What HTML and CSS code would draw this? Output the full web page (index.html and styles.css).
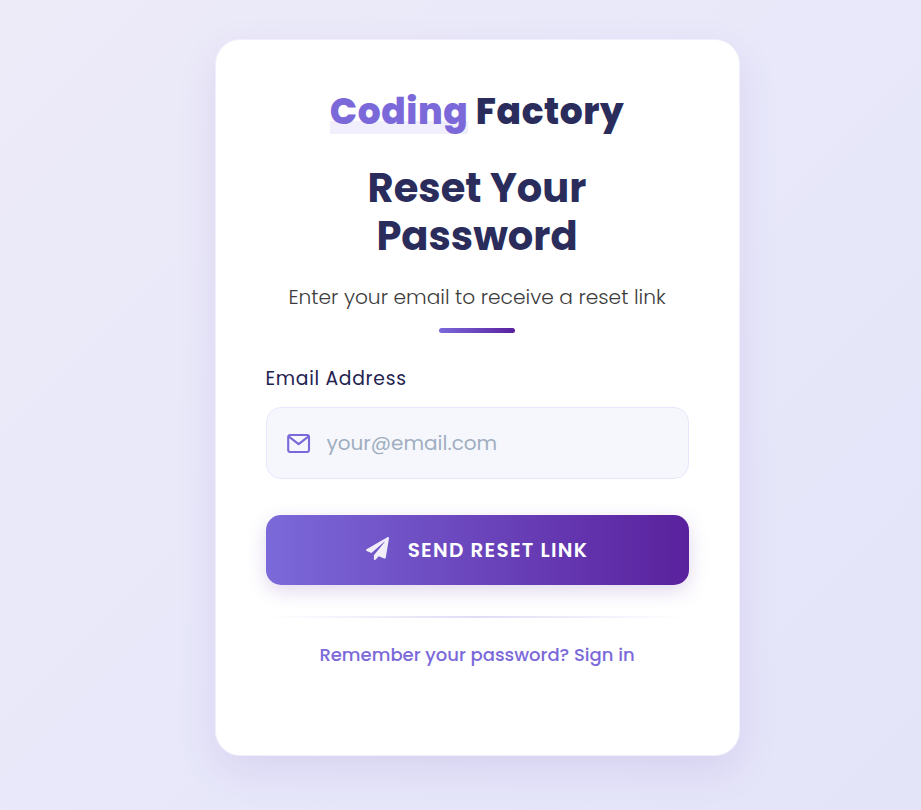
FILE: index.html
```html
<!DOCTYPE html>
<html lang="en">
<head>
<meta charset="utf-8">
<title>Reset Your Password</title>
<link rel="stylesheet" href="styles.css">
</head>
<body>
<main class="card">
  <div class="brand"><span class="brand-accent">Coding</span> Factory</div>
  <h1 class="heading">Reset Your<br>Password</h1>
  <p class="subtitle">Enter your email to receive a reset link</p>
  <div class="accent-bar"></div>
  <form class="form">
    <label class="label" for="email">Email Address</label>
    <div class="field">
      <svg class="field-icon" viewBox="0 0 24 20" fill="none" stroke="currentColor" stroke-width="2.1" stroke-linejoin="round">
        <rect x="1.2" y="2" width="20.8" height="17" rx="2"/>
        <path d="M1.6 3.4 11.6 11.2 21.6 3.4"/>
      </svg>
      <input class="input" id="email" type="email" placeholder="your@email.com">
    </div>
    <button class="button" type="button">
      <svg class="button-icon" viewBox="0 0 512 512" fill="currentColor">
        <path d="M476 3.2L12.5 270.6c-18.1 10.4-15.8 35.6 2.2 43.2L121 358.4l287.3-253.2c5.5-4.9 13.3 2.6 8.6 8.3L176 407v80.5c0 23.6 28.5 32.9 42.5 15.8L282 426l124.6 52.2c14.2 6 30.4-2.9 33-18.2l72-432C515 7.8 493.3-6.8 476 3.2z"/>
      </svg>
      <span>SEND RESET LINK</span>
    </button>
  </form>
  <div class="divider"></div>
  <a class="signin" href="#">Remember your password? Sign in</a>
</main>
</body>
</html>
```

FILE: styles.css
```css
* { box-sizing: border-box; }

body {
  margin: 0;
  min-height: 810px;
  padding: 39px 0 54px 33px;
  display: flex;
  justify-content: center;
  align-items: flex-start;
  font-family: Poppins, Inter, sans-serif;
  color: #2a2d5b;
  background: linear-gradient(135deg, #edebf8 0%, #e8e8fa 50%, #e4e4f9 100%);
}

.card {
  width: 525px;
  height: 717px;
  padding: 48px 50px 0;
  border: 1px solid #f1effb;
  border-radius: 25px;
  background: #fff;
  box-shadow: 0 15px 40px rgba(90, 40, 170, 0.1);
  display: flex;
  flex-direction: column;
  align-items: center;
}

.brand {
  font-size: 36px;
  line-height: 48px;
  font-weight: 800;
  letter-spacing: 0.6px;
  white-space: nowrap;
}

.brand-accent {
  display: inline-block;
  color: #7b69da;
  background: linear-gradient(#f1effb, #f1effb) 0 33px / 100% 13px no-repeat;
}

.heading {
  margin: 28px 0 0;
  font-size: 40px;
  line-height: 48px;
  font-weight: 700;
  text-align: center;
}

.subtitle {
  margin: 21px 0 0;
  font-size: 20.2px;
  line-height: 32px;
  font-weight: 300;
  white-space: nowrap;
  color: #3c3c3c;
}

.accent-bar {
  width: 76px;
  height: 5px;
  margin-top: 15px;
  border-radius: 3px;
  background: linear-gradient(90deg, #7b69da, #5a219d);
}

.form {
  width: 100%;
  margin-top: 31px;
  display: flex;
  flex-direction: column;
}

.label {
  font-size: 18.75px;
  line-height: 30px;
  font-weight: 400;
  letter-spacing: 0.7px;
  color: #1f2250;
}

.field {
  height: 72px;
  margin-top: 13px;
  padding: 0 20px;
  display: flex;
  align-items: center;
  gap: 16px;
  border: 1px solid #e7e7fc;
  border-radius: 15px;
  background: #f6f7fd;
}

.field-icon {
  width: 24px;
  height: 20px;
  flex: none;
  color: #7b69da;
}

.input {
  flex: 1;
  min-width: 0;
  height: 70px;
  padding: 0;
  border: 0;
  outline: 0;
  background: transparent;
  font: 400 20px Poppins, Inter, sans-serif;
  color: #2a2d5b;
}

.input::placeholder { color: #a0aec0; }

.button {
  height: 70px;
  margin-top: 36px;
  padding: 0;
  display: flex;
  align-items: center;
  justify-content: center;
  gap: 19px;
  border: 0;
  border-radius: 15px;
  background: linear-gradient(90deg, #7b69da, #5a219d);
  box-shadow: 0 6px 20px rgba(90, 33, 157, 0.18);
  color: #fff;
  font: 600 20px Poppins, Inter, sans-serif;
  letter-spacing: 1.25px;
}

.button-icon {
  width: 23px;
  height: 23px;
  margin-top: -3px;
  opacity: 0.9;
}

.divider {
  width: 100%;
  height: 2px;
  margin-top: 31px;
  background: linear-gradient(90deg, transparent, #e0dcf6, transparent);
}

.signin {
  margin-top: 23px;
  font-size: 18px;
  line-height: 28px;
  font-weight: 500;
  white-space: nowrap;
  text-decoration: none;
  color: #7b69da;
}
```
